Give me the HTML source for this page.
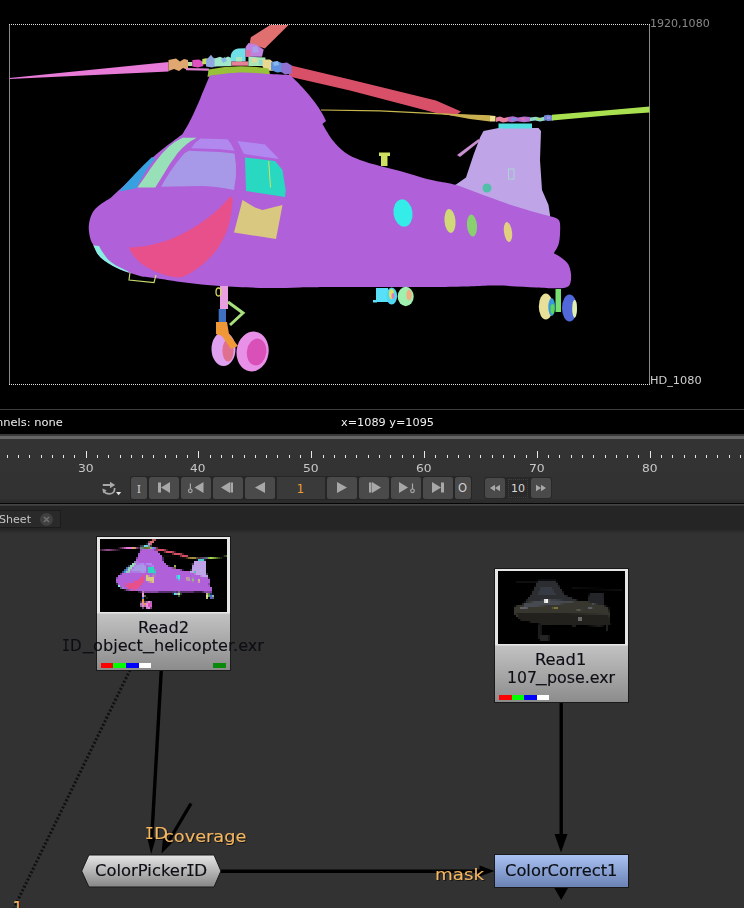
<!DOCTYPE html>
<html><head><meta charset="utf-8"><title>Nuke</title>
<style>
html,body{margin:0;padding:0;}
body{width:744px;height:908px;overflow:hidden;background:#323232;position:relative;font-family:"DejaVu Sans","Liberation Sans",sans-serif;}
.abs{position:absolute;}
.t{position:absolute;white-space:nowrap;line-height:1;transform-origin:0 0;}
#viewer{left:0;top:0;width:744px;height:434px;background:#000;}
#sep{left:0;top:409px;width:744px;height:1px;background:#3c3c3c;}
#band1{left:0;top:434px;width:744px;height:2px;background:#3a3a3a;}
#band2{left:0;top:436px;width:744px;height:3px;background:#666;}
#tl{left:0;top:439px;width:744px;height:34px;background:#333;}
#btnrow{left:0;top:473px;width:744px;height:30px;background:linear-gradient(#323232 0,#323232 26px,#2c2c2c 27px,#2b2b2b 30px);}
#dline{left:0;top:503px;width:744px;height:1px;background:#050505;}
#lline{left:0;top:504px;width:744px;height:2px;background:linear-gradient(#4a4a4a,#333);}
#tabbar{left:0;top:506px;width:744px;height:28px;background:linear-gradient(#252525 0,#252525 23px,#2b2b2b 25px,#323232 28px);}
#tab{left:-2px;top:510px;width:63px;height:18px;background:#2a2a2a;border:1px solid #1c1c1c;box-sizing:border-box;}
.btn{position:absolute;top:477px;height:22px;background:#4a4a4a;border-radius:2.5px;box-sizing:border-box;}
.node{position:absolute;box-sizing:border-box;border:1px solid #1a1a1a;}
.tl{color:#c8c8c8;}
.tabt{color:#c4c4c4;}
.info{color:#f0f0f0;}
.g1{color:#888;}
.g2{color:#cfcfcf;}
.nl{font-size:16px;color:#0c0e14;-webkit-text-stroke:0.15px #0c0e14;}
.ol{font-size:16px;color:#f5b660;-webkit-text-stroke:0.12px #f5b660;text-shadow:1px 1px 0 rgba(0,0,0,0.6);}
</style></head><body>
<div id="viewer" class="abs"></div>
<div id="sep" class="abs"></div>
<div id="band1" class="abs"></div><div id="band2" class="abs"></div>
<div id="tl" class="abs"></div><div id="btnrow" class="abs"></div>
<div id="dline" class="abs"></div><div id="lline" class="abs"></div>
<div id="tabbar" class="abs"></div><div id="tab" class="abs"></div>

<!-- viewer image -->
<svg class="abs" style="left:0;top:0" width="744" height="434" viewBox="0 0 744 434">
<g shape-rendering="crispEdges">
<line x1="9.5" y1="24" x2="9.5" y2="385" stroke="#8a8a8a" stroke-width="1"/>
<line x1="649.5" y1="24" x2="649.5" y2="385" stroke="#8a8a8a" stroke-width="1"/>
<line x1="9" y1="24.5" x2="650" y2="24.5" stroke="#e0e0e0" stroke-width="1" stroke-dasharray="1 1"/>
<line x1="9" y1="384.5" x2="650" y2="384.5" stroke="#e0e0e0" stroke-width="1" stroke-dasharray="1 1"/>
</g>
<clipPath id="bodyclip"><path d="M209.8,75.6 C209.8,75.6 230.0,72.8 240,72.5 C250.0,72.2 261.7,73.6 270,74 C278.3,74.4 290.0,75.0 290,75 C290.0,75.0 298.3,82.9 302.5,87.5 C306.7,92.1 311.7,98.1 315,102.5 C318.3,106.9 320.7,110.9 322.5,114 C324.3,117.1 326.0,121.0 326,121 C326.0,121.0 322.5,124.0 322.5,124 C322.5,124.0 328.8,135.2 332.5,140 C336.2,144.8 340.4,149.2 345,152.5 C349.6,155.8 354.2,157.8 360,160 C365.8,162.2 373.3,164.2 380,166 C386.7,167.8 393.3,169.2 400,171 C406.7,172.8 414.0,175.3 420,177 C426.0,178.7 430.0,179.7 436,181 C442.0,182.3 447.7,182.5 456,185 C464.3,187.5 476.8,192.7 486,196 C495.2,199.3 502.7,202.2 511,205 C519.3,207.8 529.5,210.6 536,212.5 C542.5,214.4 546.6,215.3 550,216.3 C553.4,217.3 554.9,217.3 556.5,218.3 C558.1,219.3 559.2,219.9 559.8,222.5 C560.4,225.1 560.2,230.3 560,234 C559.8,237.7 559.5,241.3 558.5,244.5 C557.5,247.7 553.8,253.3 553.8,253.3 C553.8,253.3 559.3,256.1 561.8,258 C564.2,259.9 567.0,262.0 568.5,264.7 C570.0,267.4 570.7,270.9 571,274 C571.3,277.1 571.1,281.2 570.2,283.5 C569.4,285.8 568.6,286.7 565.9,287.5 C563.2,288.3 558.8,288.3 553.8,288.3 C548.8,288.3 545.5,287.9 536,287.5 C526.5,287.1 512.2,285.7 497,285.6 C481.8,285.5 471.2,286.8 445,287 C418.8,287.2 364.2,286.9 340,287 C315.8,287.1 312.3,287.2 300,287.4 C287.7,287.6 279.3,288.2 266,288 C252.7,287.8 233.5,286.9 220,286 C206.5,285.1 195.8,283.8 185,282.5 C174.2,281.2 162.5,279.1 155,278 C147.5,276.9 145.2,277.1 140,275.9 C134.8,274.7 128.5,272.6 124,271 C119.5,269.4 116.3,267.8 113,266 C109.7,264.2 106.8,262.5 104.2,260.5 C101.6,258.5 99.4,256.5 97.6,253.9 C95.8,251.3 94.4,247.4 93.2,245 C92.0,242.6 91.3,241.8 90.6,239.6 C89.9,237.4 89.3,234.4 89,231.8 C88.7,229.2 88.6,226.8 89,224.1 C89.4,221.3 90.2,217.9 91.3,215.3 C92.4,212.7 93.6,210.7 95.4,208.7 C97.2,206.7 99.4,205.0 102,203.2 C104.6,201.4 108.0,199.8 110.8,197.7 C113.5,195.6 115.5,193.4 118.5,190.6 C121.5,187.8 125.4,184.5 129,181 C132.6,177.5 136.4,173.5 140.2,169.7 C143.9,165.9 147.7,161.8 151.5,158.4 C155.3,155.0 159.1,152.0 162.8,149 C166.6,146.0 170.7,143.1 174,140.6 C177.3,138.1 182.6,134.0 182.6,134 C182.6,134.0 188.0,125.0 191,119 C194.0,113.0 197.3,105.4 200.4,98.2 C203.5,91.0 209.8,75.6 209.8,75.6 Z"  /></clipPath>
<polygon points="9.5,78 168.5,62 168.5,71.5 9.5,79" fill="#e87ad8" />
<polygon points="270.2,25 288.6,25 264.8,48.5 249.7,43.5 250.8,37.2" fill="#e07070" />
<polygon points="289,65 350,79.5 436,100.5 461,111.5 455,116 436,113 350,90.5 289,76.5" fill="#d85068" />
<polyline points="321,110 380,110.8 436,113.7 470,115.5" fill="none" stroke="#c8b850" stroke-width="1.2"/>
<polygon points="440,113.5 490,115.3 490,121.5 470,119" fill="#c8b050" />
<polygon points="490,115.5 495.5,116 495.5,121.5 490,121.5" fill="#f0e090" />
<polygon points="496,117.5 500,116.5 504,118 508,117 508,121.5 503,122.5 499,121 496,122" fill="#e880a0" />
<polygon points="508,117 513,116.2 518,117.5 524,116.4 530,117 530,121.5 524,122.3 517,121.2 512,122.2 508,121.5" fill="#b070d0" />
<polygon points="512,118 516,118 516,120.5 512,120.5" fill="#7890e0" />
<polygon points="521,117.8 525,117.8 525,120.4 521,120.4" fill="#e070b0" />
<polygon points="530,117.6 536,116.8 540,117.8 545,116.6 545,120.6 540,121.4 535,120.4 530,121.2" fill="#90d8c8" />
<polygon points="537,118 541,118 541,120 537,120" fill="#a8e070" />
<polygon points="544,115.6 548,114.8 553,115.4 553,120.4 548,121 544,120" fill="#7088d8" />
<polygon points="547,116.5 550,116.5 550,119 547,119" fill="#b090e0" />
<polygon points="552,114.8 610,110 649.5,106.5 649.5,112.5 610,115.3 552,120.6" fill="#a8e050" />
<polygon points="168.5,60 176,58.5 180,61.5 184,59 188,60 188,70 183,68 179,71 174,69 168.5,71" fill="#e0a870" />
<rect x="188" y="62" width="4.4" height="4" fill="#b8e0a0"/>
<polygon points="192.4,60 199,59.5 203.3,62 203.3,66 198,67.5 192.4,66.5" fill="#e050c0" />
<polygon points="186,68 209,68.5 209,70.8 186,70.3" fill="#e080d0" />
<polygon points="202.3,59 206,58.2 209.3,59 209.3,64.2 202.3,64.2" fill="#c0e060" />
<polygon points="206,60 209,57 211,54.8 213,57.5 216.5,59 216.5,66 212,67.5 206,66.5" fill="#90a8e0" />
<polygon points="214.6,58.5 220,56.7 224,58.5 228,56.5 231.5,58 231.5,66 214.6,66.5" fill="#a0e8c8" />
<polygon points="221,59 225,57 227,61 223,63" fill="#88b8e8" />
<path d="M230.6,61.4 L230.8,55 Q232,49.5 238,48.4 L245.6,48.2 L245.6,61.4 Z" fill="#70e0e8"/>
<polygon points="231.5,61.4 248.4,61.4 248.4,65.7 231.5,65.7" fill="#e88098" />
<polygon points="236,57 242,57 242,61.4 236,61.4" fill="#a8e8c0" />
<polygon points="245.6,56.7 245.6,47 248.5,43 256,44.5 263.7,49.5 262,56.7" fill="#c080e0" />
<polygon points="245.6,50 250.5,50 250.5,56.7 245.6,56.7" fill="#e070a0" />
<polygon points="252,47 257,46 259,52 253,53" fill="#a8a0e8" />
<polygon points="248.4,56.7 265.4,57.5 265.4,66 248.4,66" fill="#a8e8b8" />
<polygon points="252,58.5 257,58.5 257,62.5 252,62.5" fill="#e0d8a0" />
<polygon points="259,60 263,60 263,65 259,65" fill="#88d8d0" />
<polygon points="262.6,59.5 270,59.5 273,62 273,70.8 266,70.8 262.6,67" fill="#e8d890" />
<polygon points="271,62.3 277,61 284,64 284,71.8 277,72.5 271,70" fill="#6090e0" />
<polygon points="273,62 278,61.3 279,65 274,66" fill="#88b8e8" />
<polygon points="281.4,63.3 287,62.5 291.7,65.5 291.7,73.6 285,74.5 281.4,72" fill="#9070d0" />
<path d="M207.5,77 L208.5,69.5 Q238,63.5 268.5,68.5 L270.5,76 Q238,70.5 207.5,77 Z" fill="#98c038"/>
<polygon points="483.5,131 498.5,128 538.5,128 541,131 540,160 542,190 548.5,205 550,215 550,219 536,216.5 511,209 486,200 461,191.5 452,186 456,184.6 466,177.5 473.5,155 480,137.5" fill="#c0a4e8" />
<polygon points="457,155 478.5,139 480,141 460,157" fill="#c890d0" />
<rect x="508.5" y="169" width="5.5" height="10" fill="none" stroke="#a8d8d0" stroke-width="1"/>
<ellipse cx="487" cy="188" rx="4.5" ry="4.5" fill="#50c0a8"/>
<rect x="498.5" y="123.5" width="33.5" height="5" fill="#50e0e0"/>
<path d="M209.8,75.6 C209.8,75.6 230.0,72.8 240,72.5 C250.0,72.2 261.7,73.6 270,74 C278.3,74.4 290.0,75.0 290,75 C290.0,75.0 298.3,82.9 302.5,87.5 C306.7,92.1 311.7,98.1 315,102.5 C318.3,106.9 320.7,110.9 322.5,114 C324.3,117.1 326.0,121.0 326,121 C326.0,121.0 322.5,124.0 322.5,124 C322.5,124.0 328.8,135.2 332.5,140 C336.2,144.8 340.4,149.2 345,152.5 C349.6,155.8 354.2,157.8 360,160 C365.8,162.2 373.3,164.2 380,166 C386.7,167.8 393.3,169.2 400,171 C406.7,172.8 414.0,175.3 420,177 C426.0,178.7 430.0,179.7 436,181 C442.0,182.3 447.7,182.5 456,185 C464.3,187.5 476.8,192.7 486,196 C495.2,199.3 502.7,202.2 511,205 C519.3,207.8 529.5,210.6 536,212.5 C542.5,214.4 546.6,215.3 550,216.3 C553.4,217.3 554.9,217.3 556.5,218.3 C558.1,219.3 559.2,219.9 559.8,222.5 C560.4,225.1 560.2,230.3 560,234 C559.8,237.7 559.5,241.3 558.5,244.5 C557.5,247.7 553.8,253.3 553.8,253.3 C553.8,253.3 559.3,256.1 561.8,258 C564.2,259.9 567.0,262.0 568.5,264.7 C570.0,267.4 570.7,270.9 571,274 C571.3,277.1 571.1,281.2 570.2,283.5 C569.4,285.8 568.6,286.7 565.9,287.5 C563.2,288.3 558.8,288.3 553.8,288.3 C548.8,288.3 545.5,287.9 536,287.5 C526.5,287.1 512.2,285.7 497,285.6 C481.8,285.5 471.2,286.8 445,287 C418.8,287.2 364.2,286.9 340,287 C315.8,287.1 312.3,287.2 300,287.4 C287.7,287.6 279.3,288.2 266,288 C252.7,287.8 233.5,286.9 220,286 C206.5,285.1 195.8,283.8 185,282.5 C174.2,281.2 162.5,279.1 155,278 C147.5,276.9 145.2,277.1 140,275.9 C134.8,274.7 128.5,272.6 124,271 C119.5,269.4 116.3,267.8 113,266 C109.7,264.2 106.8,262.5 104.2,260.5 C101.6,258.5 99.4,256.5 97.6,253.9 C95.8,251.3 94.4,247.4 93.2,245 C92.0,242.6 91.3,241.8 90.6,239.6 C89.9,237.4 89.3,234.4 89,231.8 C88.7,229.2 88.6,226.8 89,224.1 C89.4,221.3 90.2,217.9 91.3,215.3 C92.4,212.7 93.6,210.7 95.4,208.7 C97.2,206.7 99.4,205.0 102,203.2 C104.6,201.4 108.0,199.8 110.8,197.7 C113.5,195.6 115.5,193.4 118.5,190.6 C121.5,187.8 125.4,184.5 129,181 C132.6,177.5 136.4,173.5 140.2,169.7 C143.9,165.9 147.7,161.8 151.5,158.4 C155.3,155.0 159.1,152.0 162.8,149 C166.6,146.0 170.7,143.1 174,140.6 C177.3,138.1 182.6,134.0 182.6,134 C182.6,134.0 188.0,125.0 191,119 C194.0,113.0 197.3,105.4 200.4,98.2 C203.5,91.0 209.8,75.6 209.8,75.6 Z" fill="#b060d8" />
<path d="M129,247.5 C140,247 150,245.5 155,244 C165,241.5 173,238.5 180,235 C190,230 198,225 205,220 C212,215 218,210 222.5,205 C226,201 229,198 231.2,196 C233,198 233,200 232.5,202.5 C232,208 231.5,214 230,220 C228.5,227 226,234 222.5,240 C219,247 215,253 210,257.5 C205,262.5 200,267 195,270 C190,273.5 185,276.5 180,277.5 C175,277.5 170,276.5 165,275 C159,273 153,270.5 147.5,267.5 C142,264.5 138,261 135,257.5 C132,254 130,250.5 129,247.5 Z" fill="#e8508c"/>
<path clip-path="url(#bodyclip)" d="M86,244.5 L99,246 Q101,250 103,252.8 Q105.5,256.5 108.5,260 Q112,263 116,265.6 Q122,268.6 128.4,271.5 L130,276 L100,270 L86,250 Z" fill="#88f0e0"/>
<path d="M119,191.5 L136.5,188.2 Q144,172 155,158.5 L152,157 Q136,172 119,191.5 Z" fill="#38a0e0"/>
<path d="M137.4,187.6 L155.3,187.6 L162.8,175.4 Q170,163 177.9,152.8 Q186,143 196.7,137.7 L182.6,137.7 Q175,141 168.4,147 Q161,154 155.3,162 Q150,169 145.9,175.4 Z" fill="#98e0b8"/>
<path d="M161,186.7 Q166,178 170.3,171.6 Q176,163 181.6,156.6 Q185,152 189,150.8 L220,151.9 L234.5,153.5 Q236.5,165 236,176 L234,190 Q215,186 200,186 Z" fill="#a898e8"/>
<path d="M191,148.3 Q195,142 200.4,138.5 L227.5,139.3 Q232,144 234.5,150.8 L220,149.3 Z" fill="#b088ee"/>
<polygon points="237.5,141 265,144.5 279,159 244,154" fill="#b088f0" />
<polygon points="245,157.5 275,161 282.5,170 285.7,190 285,197 246,191" fill="#28d8c0" />
<line x1="268.7" y1="161" x2="270.5" y2="187.5" stroke="#d8e060" stroke-width="1"/>
<polygon points="242.5,200 255,207.5 262.5,210 282.5,205 276,239 234,232.5" fill="#d8c880" />
<ellipse cx="403" cy="213" rx="9.5" ry="13.75" fill="#34ece8" transform="rotate(-8 403 213)"/>
<ellipse cx="450" cy="221" rx="5.5" ry="12" fill="#d0d878" transform="rotate(-5 450 221)"/>
<ellipse cx="472" cy="225.5" rx="5" ry="11" fill="#88d070" transform="rotate(-5 472 225.5)"/>
<ellipse cx="508" cy="232" rx="4" ry="10" fill="#e0d080" transform="rotate(-8 508 232)"/>
<rect x="379" y="152.5" width="11" height="3.5" fill="#d0e060"/>
<rect x="381" y="156" width="6.5" height="10" fill="#d0e060"/>
<polyline points="130,272.5 129,280 154,282.5 156,275" fill="none" stroke="#c8d870" stroke-width="1.2"/>
<rect x="220" y="286" width="8" height="23" fill="#e8a0e0"/>
<ellipse cx="218.5" cy="292" rx="2.5" ry="4" fill="none" stroke="#d8d860" stroke-width="1.3"/>
<rect x="218.7" y="309" width="7.3" height="13" fill="#4070c0"/>
<polyline points="228,302 243,313 230,325" fill="none" stroke="#a8e080" stroke-width="3"/>
<ellipse cx="223.5" cy="349" rx="12" ry="17" fill="#e0a0f0"/>
<ellipse cx="228" cy="350.6" rx="5.6" ry="11" fill="#e07090"/>
<polygon points="216,322 227,322 229,334 238,346 231,349 222,336 216,334" fill="#f09838" />
<ellipse cx="252.6" cy="351.5" rx="16" ry="20" fill="#e890e8" transform="rotate(8 252.6 351.5)"/>
<ellipse cx="256.6" cy="352" rx="9.7" ry="13.5" fill="#d850b8" transform="rotate(8 256.6 352)"/>
<rect x="376" y="288" width="12" height="14" fill="#58e0f8"/>
<rect x="373" y="300" width="4" height="2.5" fill="#58e0f8"/>
<ellipse cx="391.7" cy="296" rx="5.4" ry="8.6" fill="#50d8f0"/>
<ellipse cx="391.5" cy="294" rx="2.5" ry="5" fill="#e0e060"/>
<ellipse cx="393" cy="296" rx="1.5" ry="3" fill="#e080c0"/>
<ellipse cx="405.7" cy="296.5" rx="8" ry="9.7" fill="#a0f0b0"/>
<ellipse cx="409" cy="295" rx="2.7" ry="5.4" fill="#f0b080"/>
<ellipse cx="545.8" cy="306.5" rx="7" ry="13" fill="#e8e098"/>
<ellipse cx="551.7" cy="307" rx="3.4" ry="9" fill="#3898e0"/>
<ellipse cx="552.5" cy="309" rx="2" ry="5" fill="#58d858"/>
<rect x="555.5" y="289" width="5.5" height="23" fill="#78e070"/>
<ellipse cx="569.5" cy="308" rx="7.5" ry="13.4" fill="#5068d8"/>
<ellipse cx="574.6" cy="308.7" rx="2.4" ry="9" fill="#e0f0b0"/>
</svg>

<!-- timeline -->
<svg class="abs" style="left:0;top:439px" width="744" height="64" viewBox="0 439 744 64">
<g id="ticks" shape-rendering="crispEdges" stroke="#e8e8e8" stroke-width="1">
<line x1="7.5" y1="455" x2="7.5" y2="458"/>
<line x1="18.5" y1="455" x2="18.5" y2="458"/>
<line x1="29.5" y1="455" x2="29.5" y2="458"/>
<line x1="41.5" y1="455" x2="41.5" y2="458"/>
<line x1="52.5" y1="455" x2="52.5" y2="458"/>
<line x1="63.5" y1="455" x2="63.5" y2="458"/>
<line x1="74.5" y1="455" x2="74.5" y2="458"/>
<line x1="86.5" y1="451" x2="86.5" y2="458"/>
<line x1="97.5" y1="455" x2="97.5" y2="458"/>
<line x1="108.5" y1="455" x2="108.5" y2="458"/>
<line x1="120.5" y1="455" x2="120.5" y2="458"/>
<line x1="131.5" y1="455" x2="131.5" y2="458"/>
<line x1="142.5" y1="455" x2="142.5" y2="458"/>
<line x1="153.5" y1="455" x2="153.5" y2="458"/>
<line x1="165.5" y1="455" x2="165.5" y2="458"/>
<line x1="176.5" y1="455" x2="176.5" y2="458"/>
<line x1="187.5" y1="455" x2="187.5" y2="458"/>
<line x1="198.5" y1="451" x2="198.5" y2="458"/>
<line x1="210.5" y1="455" x2="210.5" y2="458"/>
<line x1="221.5" y1="455" x2="221.5" y2="458"/>
<line x1="232.5" y1="455" x2="232.5" y2="458"/>
<line x1="244.5" y1="455" x2="244.5" y2="458"/>
<line x1="255.5" y1="455" x2="255.5" y2="458"/>
<line x1="266.5" y1="455" x2="266.5" y2="458"/>
<line x1="277.5" y1="455" x2="277.5" y2="458"/>
<line x1="289.5" y1="455" x2="289.5" y2="458"/>
<line x1="300.5" y1="455" x2="300.5" y2="458"/>
<line x1="311.5" y1="451" x2="311.5" y2="458"/>
<line x1="323.5" y1="455" x2="323.5" y2="458"/>
<line x1="334.5" y1="455" x2="334.5" y2="458"/>
<line x1="345.5" y1="455" x2="345.5" y2="458"/>
<line x1="356.5" y1="455" x2="356.5" y2="458"/>
<line x1="368.5" y1="455" x2="368.5" y2="458"/>
<line x1="379.5" y1="455" x2="379.5" y2="458"/>
<line x1="390.5" y1="455" x2="390.5" y2="458"/>
<line x1="402.5" y1="455" x2="402.5" y2="458"/>
<line x1="413.5" y1="455" x2="413.5" y2="458"/>
<line x1="424.5" y1="451" x2="424.5" y2="458"/>
<line x1="435.5" y1="455" x2="435.5" y2="458"/>
<line x1="447.5" y1="455" x2="447.5" y2="458"/>
<line x1="458.5" y1="455" x2="458.5" y2="458"/>
<line x1="469.5" y1="455" x2="469.5" y2="458"/>
<line x1="480.5" y1="455" x2="480.5" y2="458"/>
<line x1="492.5" y1="455" x2="492.5" y2="458"/>
<line x1="503.5" y1="455" x2="503.5" y2="458"/>
<line x1="514.5" y1="455" x2="514.5" y2="458"/>
<line x1="526.5" y1="455" x2="526.5" y2="458"/>
<line x1="537.5" y1="451" x2="537.5" y2="458"/>
<line x1="548.5" y1="455" x2="548.5" y2="458"/>
<line x1="559.5" y1="455" x2="559.5" y2="458"/>
<line x1="571.5" y1="455" x2="571.5" y2="458"/>
<line x1="582.5" y1="455" x2="582.5" y2="458"/>
<line x1="593.5" y1="455" x2="593.5" y2="458"/>
<line x1="605.5" y1="455" x2="605.5" y2="458"/>
<line x1="616.5" y1="455" x2="616.5" y2="458"/>
<line x1="627.5" y1="455" x2="627.5" y2="458"/>
<line x1="638.5" y1="455" x2="638.5" y2="458"/>
<line x1="650.5" y1="451" x2="650.5" y2="458"/>
<line x1="661.5" y1="455" x2="661.5" y2="458"/>
<line x1="672.5" y1="455" x2="672.5" y2="458"/>
<line x1="684.5" y1="455" x2="684.5" y2="458"/>
<line x1="695.5" y1="455" x2="695.5" y2="458"/>
<line x1="706.5" y1="455" x2="706.5" y2="458"/>
<line x1="717.5" y1="455" x2="717.5" y2="458"/>
<line x1="729.5" y1="455" x2="729.5" y2="458"/>
<line x1="740.5" y1="455" x2="740.5" y2="458"/>
</g>
</svg>


<div class="abs" style="left:130px;top:476px;width:342px;height:24px;background:#262626;border-radius:3px;"></div>
<div class="abs" style="left:484px;top:477px;width:68px;height:22px;background:#282828;border-radius:3px;"></div>
<div class="btn" style="left:131px;width:16px;top:477px;height:22px"></div>
<div class="btn" style="left:149px;width:30px;top:477px;height:22px"></div>
<div class="btn" style="left:181px;width:30px;top:477px;height:22px"></div>
<div class="btn" style="left:213px;width:30px;top:477px;height:22px"></div>
<div class="btn" style="left:245px;width:30px;top:477px;height:22px"></div>
<div class="btn" style="left:327px;width:30px;top:477px;height:22px"></div>
<div class="btn" style="left:359px;width:30px;top:477px;height:22px"></div>
<div class="btn" style="left:391px;width:30px;top:477px;height:22px"></div>
<div class="btn" style="left:423px;width:30px;top:477px;height:22px"></div>
<div class="btn" style="left:455px;width:16px;top:477px;height:22px"></div>
<div class="btn" style="left:485px;width:20px;top:478px;height:20px"></div>
<div class="btn" style="left:531px;width:20px;top:478px;height:20px"></div>
<div class="abs" style="left:277px;top:477px;width:48px;height:22px;background:#3a3a3a;"></div>
<div class="t" style="left:276.5px;top:483.6px;width:48px;text-align:center;font-size:11.5px;color:#f0a030;">1</div>
<div class="abs" style="left:508px;top:479px;width:20px;height:18.5px;background:#2a2a2a;border:1px dotted #3e3e3e;box-sizing:border-box;"></div>
<div class="t" style="left:507px;top:483.4px;width:22px;text-align:center;font-size:11px;color:#d8d8d8;">10</div>
<div class="t" style="left:131px;top:483.5px;width:16px;text-align:center;font-size:11px;color:#d0d0d0;font-family:'DejaVu Serif','Liberation Serif',serif;">I</div>
<div class="t" style="left:454.5px;top:482.6px;width:16px;text-align:center;font-size:11.5px;color:#d0d0d0;">O</div>
<svg class="abs" style="left:0;top:473px" width="744" height="30" viewBox="0 473 744 30"><g fill="#a8a8a8"><rect x="158" y="482.5" width="3" height="10"/><polygon points="161,487.5 170,482 170,493"/><circle cx="190.3" cy="490.8" r="1.8" fill="none" stroke="#a8a8a8" stroke-width="1.2"/><rect x="189.8" y="483.5" width="1.2" height="5.5"/><polygon points="194.5,487.5 203.5,482 203.5,493"/><polygon points="221,487.5 230,482 230,493"/><rect x="230.5" y="482.5" width="2.5" height="10"/><polygon points="255,487.5 265,482 265,493"/><polygon points="347,487.5 337,482 337,493"/><rect x="369" y="482.5" width="2.5" height="10"/><polygon points="381,487.5 372,482 372,493"/><polygon points="408,487.5 399,482 399,493"/><circle cx="412.5" cy="490.8" r="1.8" fill="none" stroke="#a8a8a8" stroke-width="1.2"/><rect x="411.9" y="483.5" width="1.2" height="5.5"/><polygon points="441,487.5 432,482 432,493"/><rect x="441" y="482.5" width="3" height="10"/><polygon points="490,488 495,484.8 495,491.2"/><polygon points="495,488 500,484.8 500,491.2"/><polygon points="541,488 536,484.8 536,491.2"/><polygon points="546,488 541,484.8 541,491.2"/><path d="M102.8,484 L110,484 L110,481.8 L115.2,485 L110,488.2 L110,486 L102.8,486 Z"/><path d="M114.6,488 Q115,493.6 109.5,493.8 Q105.5,493.8 103.8,491.2" fill="none" stroke="#a8a8a8" stroke-width="1.7"/><polygon points="102.3,488.6 106.6,490.3 103.2,493.2"/><polygon points="116,492 121.2,492 118.6,495.2" fill="#e6e6e6"/></g></svg>

<div class="abs" style="left:40px;top:513px;width:13px;height:13px;border-radius:7px;background:#404040;"></div>
<svg class="abs" style="left:40px;top:513px" width="13" height="13"><path d="M4,4 L9,9 M9,4 L4,9" stroke="#707070" stroke-width="1.5" fill="none"/></svg>

<!-- node graph edges -->
<svg class="abs" style="left:0;top:530px" width="744" height="378" viewBox="0 530 744 378">
<line x1="130" y1="670" x2="14" y2="908" stroke="#101010" stroke-width="3" stroke-dasharray="2 2"/>
<line x1="161.3" y1="670" x2="151.5" y2="842" stroke="#000" stroke-width="3.4"/>
<polygon points="147,837 156,837.5 151.2,854" fill="#000"/>
<line x1="191" y1="803.5" x2="167" y2="844" stroke="#000" stroke-width="3.4"/>
<polygon points="163,838 172,843 161.5,853.5" fill="#000"/>
<line x1="218" y1="871.2" x2="482" y2="871.2" stroke="#000" stroke-width="3.4"/>
<polygon points="479.5,865.5 494.5,871 479.5,876.5" fill="#000"/>
<line x1="561.2" y1="702" x2="561.2" y2="838" stroke="#000" stroke-width="3.4"/>
<polygon points="554.5,834 567.5,834 561,852.5" fill="#000"/>
<polygon points="553.8,887 568.6,887 561.2,900" fill="#000"/>
</svg>

<!-- Read2 -->
<div class="node" style="left:96.2px;top:536px;width:134.5px;height:135px;background:linear-gradient(#e6e6e6 0px,#e6e6e6 76px,#c2c2c2 77px,#8c8c8c 133px);"></div>
<svg class="abs" style="left:100px;top:539px;background:#000" width="127" height="73" viewBox="0 0 127 73">
<defs><filter id="pix" x="0" y="0" width="128" height="73" filterUnits="userSpaceOnUse" color-interpolation-filters="sRGB">
<feFlood x="0" y="0" width="1" height="1"/><feComposite width="2" height="2"/><feTile result="a"/>
<feComposite in="SourceGraphic" in2="a" operator="in" result="s"/><feOffset in="s" dx="1" dy="0" result="s1"/>
<feMerge result="r1"><feMergeNode in="s"/><feMergeNode in="s1"/></feMerge><feOffset in="r1" dx="0" dy="1" result="r2"/>
<feMerge><feMergeNode in="r1"/><feMergeNode in="r2"/></feMerge></filter></defs>
<g filter="url(#pix)"><rect x="0" y="0" width="128" height="73" fill="#000"/><g transform="scale(0.1984 0.2) translate(-9 -24)">
<clipPath id="bodyclipT"><path d="M209.8,75.6 C209.8,75.6 230.0,72.8 240,72.5 C250.0,72.2 261.7,73.6 270,74 C278.3,74.4 290.0,75.0 290,75 C290.0,75.0 298.3,82.9 302.5,87.5 C306.7,92.1 311.7,98.1 315,102.5 C318.3,106.9 320.7,110.9 322.5,114 C324.3,117.1 326.0,121.0 326,121 C326.0,121.0 322.5,124.0 322.5,124 C322.5,124.0 328.8,135.2 332.5,140 C336.2,144.8 340.4,149.2 345,152.5 C349.6,155.8 354.2,157.8 360,160 C365.8,162.2 373.3,164.2 380,166 C386.7,167.8 393.3,169.2 400,171 C406.7,172.8 414.0,175.3 420,177 C426.0,178.7 430.0,179.7 436,181 C442.0,182.3 447.7,182.5 456,185 C464.3,187.5 476.8,192.7 486,196 C495.2,199.3 502.7,202.2 511,205 C519.3,207.8 529.5,210.6 536,212.5 C542.5,214.4 546.6,215.3 550,216.3 C553.4,217.3 554.9,217.3 556.5,218.3 C558.1,219.3 559.2,219.9 559.8,222.5 C560.4,225.1 560.2,230.3 560,234 C559.8,237.7 559.5,241.3 558.5,244.5 C557.5,247.7 553.8,253.3 553.8,253.3 C553.8,253.3 559.3,256.1 561.8,258 C564.2,259.9 567.0,262.0 568.5,264.7 C570.0,267.4 570.7,270.9 571,274 C571.3,277.1 571.1,281.2 570.2,283.5 C569.4,285.8 568.6,286.7 565.9,287.5 C563.2,288.3 558.8,288.3 553.8,288.3 C548.8,288.3 545.5,287.9 536,287.5 C526.5,287.1 512.2,285.7 497,285.6 C481.8,285.5 471.2,286.8 445,287 C418.8,287.2 364.2,286.9 340,287 C315.8,287.1 312.3,287.2 300,287.4 C287.7,287.6 279.3,288.2 266,288 C252.7,287.8 233.5,286.9 220,286 C206.5,285.1 195.8,283.8 185,282.5 C174.2,281.2 162.5,279.1 155,278 C147.5,276.9 145.2,277.1 140,275.9 C134.8,274.7 128.5,272.6 124,271 C119.5,269.4 116.3,267.8 113,266 C109.7,264.2 106.8,262.5 104.2,260.5 C101.6,258.5 99.4,256.5 97.6,253.9 C95.8,251.3 94.4,247.4 93.2,245 C92.0,242.6 91.3,241.8 90.6,239.6 C89.9,237.4 89.3,234.4 89,231.8 C88.7,229.2 88.6,226.8 89,224.1 C89.4,221.3 90.2,217.9 91.3,215.3 C92.4,212.7 93.6,210.7 95.4,208.7 C97.2,206.7 99.4,205.0 102,203.2 C104.6,201.4 108.0,199.8 110.8,197.7 C113.5,195.6 115.5,193.4 118.5,190.6 C121.5,187.8 125.4,184.5 129,181 C132.6,177.5 136.4,173.5 140.2,169.7 C143.9,165.9 147.7,161.8 151.5,158.4 C155.3,155.0 159.1,152.0 162.8,149 C166.6,146.0 170.7,143.1 174,140.6 C177.3,138.1 182.6,134.0 182.6,134 C182.6,134.0 188.0,125.0 191,119 C194.0,113.0 197.3,105.4 200.4,98.2 C203.5,91.0 209.8,75.6 209.8,75.6 Z"  /></clipPath>
<polygon points="9.5,78 168.5,62 168.5,71.5 9.5,79" fill="#e87ad8" />
<polygon points="270.2,25 288.6,25 264.8,48.5 249.7,43.5 250.8,37.2" fill="#e07070" />
<polygon points="289,65 350,79.5 436,100.5 461,111.5 455,116 436,113 350,90.5 289,76.5" fill="#d85068" />
<polyline points="321,110 380,110.8 436,113.7 470,115.5" fill="none" stroke="#c8b850" stroke-width="1.2"/>
<polygon points="440,113.5 490,115.3 490,121.5 470,119" fill="#c8b050" />
<polygon points="490,115.5 495.5,116 495.5,121.5 490,121.5" fill="#f0e090" />
<polygon points="496,117.5 500,116.5 504,118 508,117 508,121.5 503,122.5 499,121 496,122" fill="#e880a0" />
<polygon points="508,117 513,116.2 518,117.5 524,116.4 530,117 530,121.5 524,122.3 517,121.2 512,122.2 508,121.5" fill="#b070d0" />
<polygon points="512,118 516,118 516,120.5 512,120.5" fill="#7890e0" />
<polygon points="521,117.8 525,117.8 525,120.4 521,120.4" fill="#e070b0" />
<polygon points="530,117.6 536,116.8 540,117.8 545,116.6 545,120.6 540,121.4 535,120.4 530,121.2" fill="#90d8c8" />
<polygon points="537,118 541,118 541,120 537,120" fill="#a8e070" />
<polygon points="544,115.6 548,114.8 553,115.4 553,120.4 548,121 544,120" fill="#7088d8" />
<polygon points="547,116.5 550,116.5 550,119 547,119" fill="#b090e0" />
<polygon points="552,114.8 610,110 649.5,106.5 649.5,112.5 610,115.3 552,120.6" fill="#a8e050" />
<polygon points="168.5,60 176,58.5 180,61.5 184,59 188,60 188,70 183,68 179,71 174,69 168.5,71" fill="#e0a870" />
<rect x="188" y="62" width="4.4" height="4" fill="#b8e0a0"/>
<polygon points="192.4,60 199,59.5 203.3,62 203.3,66 198,67.5 192.4,66.5" fill="#e050c0" />
<polygon points="186,68 209,68.5 209,70.8 186,70.3" fill="#e080d0" />
<polygon points="202.3,59 206,58.2 209.3,59 209.3,64.2 202.3,64.2" fill="#c0e060" />
<polygon points="206,60 209,57 211,54.8 213,57.5 216.5,59 216.5,66 212,67.5 206,66.5" fill="#90a8e0" />
<polygon points="214.6,58.5 220,56.7 224,58.5 228,56.5 231.5,58 231.5,66 214.6,66.5" fill="#a0e8c8" />
<polygon points="221,59 225,57 227,61 223,63" fill="#88b8e8" />
<path d="M230.6,61.4 L230.8,55 Q232,49.5 238,48.4 L245.6,48.2 L245.6,61.4 Z" fill="#70e0e8"/>
<polygon points="231.5,61.4 248.4,61.4 248.4,65.7 231.5,65.7" fill="#e88098" />
<polygon points="236,57 242,57 242,61.4 236,61.4" fill="#a8e8c0" />
<polygon points="245.6,56.7 245.6,47 248.5,43 256,44.5 263.7,49.5 262,56.7" fill="#c080e0" />
<polygon points="245.6,50 250.5,50 250.5,56.7 245.6,56.7" fill="#e070a0" />
<polygon points="252,47 257,46 259,52 253,53" fill="#a8a0e8" />
<polygon points="248.4,56.7 265.4,57.5 265.4,66 248.4,66" fill="#a8e8b8" />
<polygon points="252,58.5 257,58.5 257,62.5 252,62.5" fill="#e0d8a0" />
<polygon points="259,60 263,60 263,65 259,65" fill="#88d8d0" />
<polygon points="262.6,59.5 270,59.5 273,62 273,70.8 266,70.8 262.6,67" fill="#e8d890" />
<polygon points="271,62.3 277,61 284,64 284,71.8 277,72.5 271,70" fill="#6090e0" />
<polygon points="273,62 278,61.3 279,65 274,66" fill="#88b8e8" />
<polygon points="281.4,63.3 287,62.5 291.7,65.5 291.7,73.6 285,74.5 281.4,72" fill="#9070d0" />
<path d="M207.5,77 L208.5,69.5 Q238,63.5 268.5,68.5 L270.5,76 Q238,70.5 207.5,77 Z" fill="#98c038"/>
<polygon points="483.5,131 498.5,128 538.5,128 541,131 540,160 542,190 548.5,205 550,215 550,219 536,216.5 511,209 486,200 461,191.5 452,186 456,184.6 466,177.5 473.5,155 480,137.5" fill="#c0a4e8" />
<polygon points="457,155 478.5,139 480,141 460,157" fill="#c890d0" />
<rect x="508.5" y="169" width="5.5" height="10" fill="none" stroke="#a8d8d0" stroke-width="1"/>
<ellipse cx="487" cy="188" rx="4.5" ry="4.5" fill="#50c0a8"/>
<rect x="498.5" y="123.5" width="33.5" height="5" fill="#50e0e0"/>
<path d="M209.8,75.6 C209.8,75.6 230.0,72.8 240,72.5 C250.0,72.2 261.7,73.6 270,74 C278.3,74.4 290.0,75.0 290,75 C290.0,75.0 298.3,82.9 302.5,87.5 C306.7,92.1 311.7,98.1 315,102.5 C318.3,106.9 320.7,110.9 322.5,114 C324.3,117.1 326.0,121.0 326,121 C326.0,121.0 322.5,124.0 322.5,124 C322.5,124.0 328.8,135.2 332.5,140 C336.2,144.8 340.4,149.2 345,152.5 C349.6,155.8 354.2,157.8 360,160 C365.8,162.2 373.3,164.2 380,166 C386.7,167.8 393.3,169.2 400,171 C406.7,172.8 414.0,175.3 420,177 C426.0,178.7 430.0,179.7 436,181 C442.0,182.3 447.7,182.5 456,185 C464.3,187.5 476.8,192.7 486,196 C495.2,199.3 502.7,202.2 511,205 C519.3,207.8 529.5,210.6 536,212.5 C542.5,214.4 546.6,215.3 550,216.3 C553.4,217.3 554.9,217.3 556.5,218.3 C558.1,219.3 559.2,219.9 559.8,222.5 C560.4,225.1 560.2,230.3 560,234 C559.8,237.7 559.5,241.3 558.5,244.5 C557.5,247.7 553.8,253.3 553.8,253.3 C553.8,253.3 559.3,256.1 561.8,258 C564.2,259.9 567.0,262.0 568.5,264.7 C570.0,267.4 570.7,270.9 571,274 C571.3,277.1 571.1,281.2 570.2,283.5 C569.4,285.8 568.6,286.7 565.9,287.5 C563.2,288.3 558.8,288.3 553.8,288.3 C548.8,288.3 545.5,287.9 536,287.5 C526.5,287.1 512.2,285.7 497,285.6 C481.8,285.5 471.2,286.8 445,287 C418.8,287.2 364.2,286.9 340,287 C315.8,287.1 312.3,287.2 300,287.4 C287.7,287.6 279.3,288.2 266,288 C252.7,287.8 233.5,286.9 220,286 C206.5,285.1 195.8,283.8 185,282.5 C174.2,281.2 162.5,279.1 155,278 C147.5,276.9 145.2,277.1 140,275.9 C134.8,274.7 128.5,272.6 124,271 C119.5,269.4 116.3,267.8 113,266 C109.7,264.2 106.8,262.5 104.2,260.5 C101.6,258.5 99.4,256.5 97.6,253.9 C95.8,251.3 94.4,247.4 93.2,245 C92.0,242.6 91.3,241.8 90.6,239.6 C89.9,237.4 89.3,234.4 89,231.8 C88.7,229.2 88.6,226.8 89,224.1 C89.4,221.3 90.2,217.9 91.3,215.3 C92.4,212.7 93.6,210.7 95.4,208.7 C97.2,206.7 99.4,205.0 102,203.2 C104.6,201.4 108.0,199.8 110.8,197.7 C113.5,195.6 115.5,193.4 118.5,190.6 C121.5,187.8 125.4,184.5 129,181 C132.6,177.5 136.4,173.5 140.2,169.7 C143.9,165.9 147.7,161.8 151.5,158.4 C155.3,155.0 159.1,152.0 162.8,149 C166.6,146.0 170.7,143.1 174,140.6 C177.3,138.1 182.6,134.0 182.6,134 C182.6,134.0 188.0,125.0 191,119 C194.0,113.0 197.3,105.4 200.4,98.2 C203.5,91.0 209.8,75.6 209.8,75.6 Z" fill="#b060d8" />
<path d="M129,247.5 C140,247 150,245.5 155,244 C165,241.5 173,238.5 180,235 C190,230 198,225 205,220 C212,215 218,210 222.5,205 C226,201 229,198 231.2,196 C233,198 233,200 232.5,202.5 C232,208 231.5,214 230,220 C228.5,227 226,234 222.5,240 C219,247 215,253 210,257.5 C205,262.5 200,267 195,270 C190,273.5 185,276.5 180,277.5 C175,277.5 170,276.5 165,275 C159,273 153,270.5 147.5,267.5 C142,264.5 138,261 135,257.5 C132,254 130,250.5 129,247.5 Z" fill="#e8508c"/>
<path clip-path="url(#bodyclipT)" d="M86,244.5 L99,246 Q101,250 103,252.8 Q105.5,256.5 108.5,260 Q112,263 116,265.6 Q122,268.6 128.4,271.5 L130,276 L100,270 L86,250 Z" fill="#88f0e0"/>
<path d="M119,191.5 L136.5,188.2 Q144,172 155,158.5 L152,157 Q136,172 119,191.5 Z" fill="#38a0e0"/>
<path d="M137.4,187.6 L155.3,187.6 L162.8,175.4 Q170,163 177.9,152.8 Q186,143 196.7,137.7 L182.6,137.7 Q175,141 168.4,147 Q161,154 155.3,162 Q150,169 145.9,175.4 Z" fill="#98e0b8"/>
<path d="M161,186.7 Q166,178 170.3,171.6 Q176,163 181.6,156.6 Q185,152 189,150.8 L220,151.9 L234.5,153.5 Q236.5,165 236,176 L234,190 Q215,186 200,186 Z" fill="#a898e8"/>
<path d="M191,148.3 Q195,142 200.4,138.5 L227.5,139.3 Q232,144 234.5,150.8 L220,149.3 Z" fill="#b088ee"/>
<polygon points="237.5,141 265,144.5 279,159 244,154" fill="#b088f0" />
<polygon points="245,157.5 275,161 282.5,170 285.7,190 285,197 246,191" fill="#28d8c0" />
<line x1="268.7" y1="161" x2="270.5" y2="187.5" stroke="#d8e060" stroke-width="1"/>
<polygon points="242.5,200 255,207.5 262.5,210 282.5,205 276,239 234,232.5" fill="#d8c880" />
<ellipse cx="403" cy="213" rx="9.5" ry="13.75" fill="#34ece8" transform="rotate(-8 403 213)"/>
<ellipse cx="450" cy="221" rx="5.5" ry="12" fill="#d0d878" transform="rotate(-5 450 221)"/>
<ellipse cx="472" cy="225.5" rx="5" ry="11" fill="#88d070" transform="rotate(-5 472 225.5)"/>
<ellipse cx="508" cy="232" rx="4" ry="10" fill="#e0d080" transform="rotate(-8 508 232)"/>
<rect x="379" y="152.5" width="11" height="3.5" fill="#d0e060"/>
<rect x="381" y="156" width="6.5" height="10" fill="#d0e060"/>
<polyline points="130,272.5 129,280 154,282.5 156,275" fill="none" stroke="#c8d870" stroke-width="1.2"/>
<rect x="220" y="286" width="8" height="23" fill="#e8a0e0"/>
<ellipse cx="218.5" cy="292" rx="2.5" ry="4" fill="none" stroke="#d8d860" stroke-width="1.3"/>
<rect x="218.7" y="309" width="7.3" height="13" fill="#4070c0"/>
<polyline points="228,302 243,313 230,325" fill="none" stroke="#a8e080" stroke-width="3"/>
<ellipse cx="223.5" cy="349" rx="12" ry="17" fill="#e0a0f0"/>
<ellipse cx="228" cy="350.6" rx="5.6" ry="11" fill="#e07090"/>
<polygon points="216,322 227,322 229,334 238,346 231,349 222,336 216,334" fill="#f09838" />
<ellipse cx="252.6" cy="351.5" rx="16" ry="20" fill="#e890e8" transform="rotate(8 252.6 351.5)"/>
<ellipse cx="256.6" cy="352" rx="9.7" ry="13.5" fill="#d850b8" transform="rotate(8 256.6 352)"/>
<rect x="376" y="288" width="12" height="14" fill="#58e0f8"/>
<rect x="373" y="300" width="4" height="2.5" fill="#58e0f8"/>
<ellipse cx="391.7" cy="296" rx="5.4" ry="8.6" fill="#50d8f0"/>
<ellipse cx="391.5" cy="294" rx="2.5" ry="5" fill="#e0e060"/>
<ellipse cx="393" cy="296" rx="1.5" ry="3" fill="#e080c0"/>
<ellipse cx="405.7" cy="296.5" rx="8" ry="9.7" fill="#a0f0b0"/>
<ellipse cx="409" cy="295" rx="2.7" ry="5.4" fill="#f0b080"/>
<ellipse cx="545.8" cy="306.5" rx="7" ry="13" fill="#e8e098"/>
<ellipse cx="551.7" cy="307" rx="3.4" ry="9" fill="#3898e0"/>
<ellipse cx="552.5" cy="309" rx="2" ry="5" fill="#58d858"/>
<rect x="555.5" y="289" width="5.5" height="23" fill="#78e070"/>
<ellipse cx="569.5" cy="308" rx="7.5" ry="13.4" fill="#5068d8"/>
<ellipse cx="574.6" cy="308.7" rx="2.4" ry="9" fill="#e0f0b0"/>
</g></g>
</svg>
<div class="abs" style="left:101px;top:663px;width:12px;height:5px;background:#f00"></div>
<div class="abs" style="left:113px;top:663px;width:13px;height:5px;background:#0f0"></div>
<div class="abs" style="left:126px;top:663px;width:12.5px;height:5px;background:#00f"></div>
<div class="abs" style="left:138.5px;top:663px;width:12.3px;height:5px;background:#fff"></div>
<div class="abs" style="left:213px;top:663px;width:13px;height:5px;background:#0a8a0a"></div>

<!-- Read1 -->
<div class="node" style="left:494.3px;top:568.1px;width:134.4px;height:134.6px;background:linear-gradient(#e6e6e6 0px,#e6e6e6 76px,#c2c2c2 77px,#8c8c8c 133px);"></div>
<svg class="abs" style="left:498px;top:571px;background:#000" width="127" height="73" viewBox="0 0 127 73">
<defs><filter id="pix2" x="0" y="0" width="128" height="73" filterUnits="userSpaceOnUse" color-interpolation-filters="sRGB">
<feFlood x="0" y="0" width="1" height="1"/><feComposite width="2" height="2"/><feTile result="a"/>
<feComposite in="SourceGraphic" in2="a" operator="in" result="s"/><feOffset in="s" dx="1" dy="0" result="s1"/>
<feMerge result="r1"><feMergeNode in="s"/><feMergeNode in="s1"/></feMerge><feOffset in="r1" dx="0" dy="1" result="r2"/>
<feMerge><feMergeNode in="r1"/><feMergeNode in="r2"/></feMerge></filter></defs>
<g filter="url(#pix2)"><rect x="0" y="0" width="128" height="73" fill="#000"/><g transform="scale(0.992 1) translate(-498 -571)">
<line x1="515" y1="581" x2="557" y2="581" stroke="#151515" stroke-width="1.5"/>
<line x1="572" y1="588" x2="622" y2="589" stroke="#131313" stroke-width="1.5"/>
<polygon points="589.7,592.7 603.7,592.3 604.3,622.4 591.8,613.8 587.5,603" fill="#232528" />
<polygon points="538,579.8 555.3,579.8 565,594.4 583.2,602 520.9,606.2 530.5,594.4" fill="#2b2d31" />
<polygon points="541,586 551,586 556,594 537,595" fill="#363a42" />
<polygon points="513.3,606.2 530,601 583.2,600 609,606.2 611.2,624.5 600.4,625.6 572.5,624.5 540.2,623.4 518.7,619.1 513.3,612.7" fill="#38372f" />
<polygon points="516,612 609,614 611,624.5 600.4,625.6 572.5,624.5 540.2,623.4 518.7,619.1" fill="#22211d" />
<polygon points="524,603 545,599 560,599.5 575,601.5 555,604.5 524,607" fill="#474a50" />
<rect x="544.5" y="598" width="4" height="4" fill="#f4f4f4"/>
<rect x="520" y="606" width="7" height="2" fill="#60646a"/>
<rect x="553" y="606.5" width="5" height="2.5" fill="#7a7436"/>
<rect x="577" y="608" width="4" height="2" fill="#5a5a50"/>
<rect x="578" y="616" width="4" height="4" fill="#686868"/>
<rect x="588" y="606" width="5" height="3" fill="#5a5e66"/>
<rect x="592" y="602" width="3" height="3" fill="#484c54"/>
<rect x="538.5" y="624.5" width="2.5" height="14" fill="#222222"/>
<rect x="540" y="634" width="9" height="6" fill="#242424"/>
<rect x="572" y="624.5" width="4" height="2.5" fill="#1e1e1e"/>
<rect x="606" y="622" width="2" height="9" fill="#202020"/>
</g></g>
</svg>
<div class="abs" style="left:499px;top:695px;width:12.5px;height:5px;background:#f00"></div>
<div class="abs" style="left:511.5px;top:695px;width:12.5px;height:5px;background:#0f0"></div>
<div class="abs" style="left:524px;top:695px;width:12.5px;height:5px;background:#00f"></div>
<div class="abs" style="left:536.5px;top:695px;width:12.5px;height:5px;background:#fff"></div>

<!-- ColorPickerID -->
<svg class="abs" style="left:78px;top:852px" width="148" height="38" viewBox="78 852 148 38">
<defs><linearGradient id="gp" x1="0" y1="0" x2="0" y2="1"><stop offset="0" stop-color="#e6e6e6"/><stop offset="1" stop-color="#868686"/></linearGradient></defs>
<polygon points="81.7,871 88.9,855 214,855 220.9,871 214,887 88.9,887" fill="url(#gp)" stroke="#1a1a1a" stroke-width="1" stroke-linejoin="round"/>
</svg>

<!-- ColorCorrect1 -->
<div class="node" style="left:494px;top:854px;width:135px;height:34px;background:linear-gradient(#aac2f2,#6a82b4);"></div>
<div><span class="t tl" style="left:77.83px;top:464.20px;font-size:9.6px;transform:scaleX(1.2894);">30</span></div>
<div><span class="t tl" style="left:190.17px;top:464.20px;font-size:9.6px;transform:scaleX(1.2598);">40</span></div>
<div><span class="t tl" style="left:302.83px;top:464.20px;font-size:9.6px;transform:scaleX(1.2894);">50</span></div>
<div><span class="t tl" style="left:416.00px;top:464.20px;font-size:9.6px;transform:scaleX(1.2744);">60</span></div>
<div><span class="t tl" style="left:528.83px;top:464.20px;font-size:9.6px;transform:scaleX(1.2894);">70</span></div>
<div><span class="t tl" style="left:642.00px;top:464.20px;font-size:9.6px;transform:scaleX(1.2744);">80</span></div>
<div><span class="t nl" style="left:137.88px;top:620.00px;font-size:16px;transform:scaleX(1.0132);">Read2</span></div>
<div><span class="t nl" style="left:62.38px;top:638.00px;font-size:16px;font-family:'DejaVu Sans Mono','Liberation Mono',monospace;transform:scaleX(0.8154);">I</span><span class="t nl" style="left:70.29px;top:638.00px;font-size:16px;transform:scaleX(0.9418);">D</span><span class="t nl" style="left:82.77px;top:636.20px;font-size:16px;transform:scaleX(1.3212);">_</span><span class="t nl" style="left:93.42px;top:638.00px;font-size:16px;transform:scaleX(1.0104);">object</span><span class="t nl" style="left:143.47px;top:636.20px;font-size:16px;transform:scaleX(1.3697);">_</span><span class="t nl" style="left:154.19px;top:638.00px;font-size:16px;transform:scaleX(1.0035);">helicopter.exr</span></div>
<div><span class="t nl" style="left:535.47px;top:652.00px;font-size:16px;transform:scaleX(1.0168);">Read1</span></div>
<div><span class="t nl" style="left:506.58px;top:670.00px;font-size:16px;transform:scaleX(0.9818);">107</span><span class="t nl" style="left:536.47px;top:668.20px;font-size:16px;transform:scaleX(1.3212);">_</span><span class="t nl" style="left:546.82px;top:670.00px;font-size:16px;transform:scaleX(0.9900);">pose.exr</span></div>
<div><span class="t nl" style="left:95.10px;top:862.60px;font-size:16px;transform:scaleX(1.0245);">ColorPicker</span><span class="t nl" style="left:186.42px;top:862.60px;font-size:16px;font-family:'DejaVu Sans Mono','Liberation Mono',monospace;transform:scaleX(0.9231);">I</span><span class="t nl" style="left:193.79px;top:862.60px;font-size:16px;transform:scaleX(1.0734);">D</span></div>
<div><span class="t nl" style="left:504.71px;top:863.10px;font-size:16px;transform:scaleX(1.0194);">ColorCorrect1</span></div>
<div><span class="t ol" style="left:145.14px;top:825.70px;font-size:16px;font-family:'DejaVu Sans Mono','Liberation Mono',monospace;transform:scaleX(0.9077);">I</span><span class="t ol" style="left:153.88px;top:825.70px;font-size:16px;transform:scaleX(1.1443);">D</span></div>
<div><span class="t ol" style="left:163.73px;top:828.90px;font-size:16px;transform:scaleX(1.1098);">coverage</span></div>
<div><span class="t ol" style="left:435.29px;top:866.80px;font-size:16px;transform:scaleX(1.1408);">mask</span></div>
<div><span class="t info" style="left:-3.64px;top:416.72px;font-size:11px;transform:scaleX(1.0411);">nnels: none</span></div>
<div><span class="t info" style="left:340.62px;top:416.52px;font-size:11px;transform:scaleX(1.0223);">x=1089 y=1095</span></div>
<div><span class="t tabt" style="left:-1.06px;top:513.72px;font-size:11px;transform:scaleX(1.0073);">Sheet</span></div>
<div><span class="t g1" style="left:650.05px;top:17.72px;font-size:11px;transform:scaleX(1.0035);">1920,1080</span></div>
<div><span class="t g2" style="left:650.14px;top:374.72px;font-size:11px;transform:scaleX(1.0274);">HD_1080</span></div>
<div class="t ol" style="left:12.5px;top:900px;font-size:16px;">1</div>
</body></html>
